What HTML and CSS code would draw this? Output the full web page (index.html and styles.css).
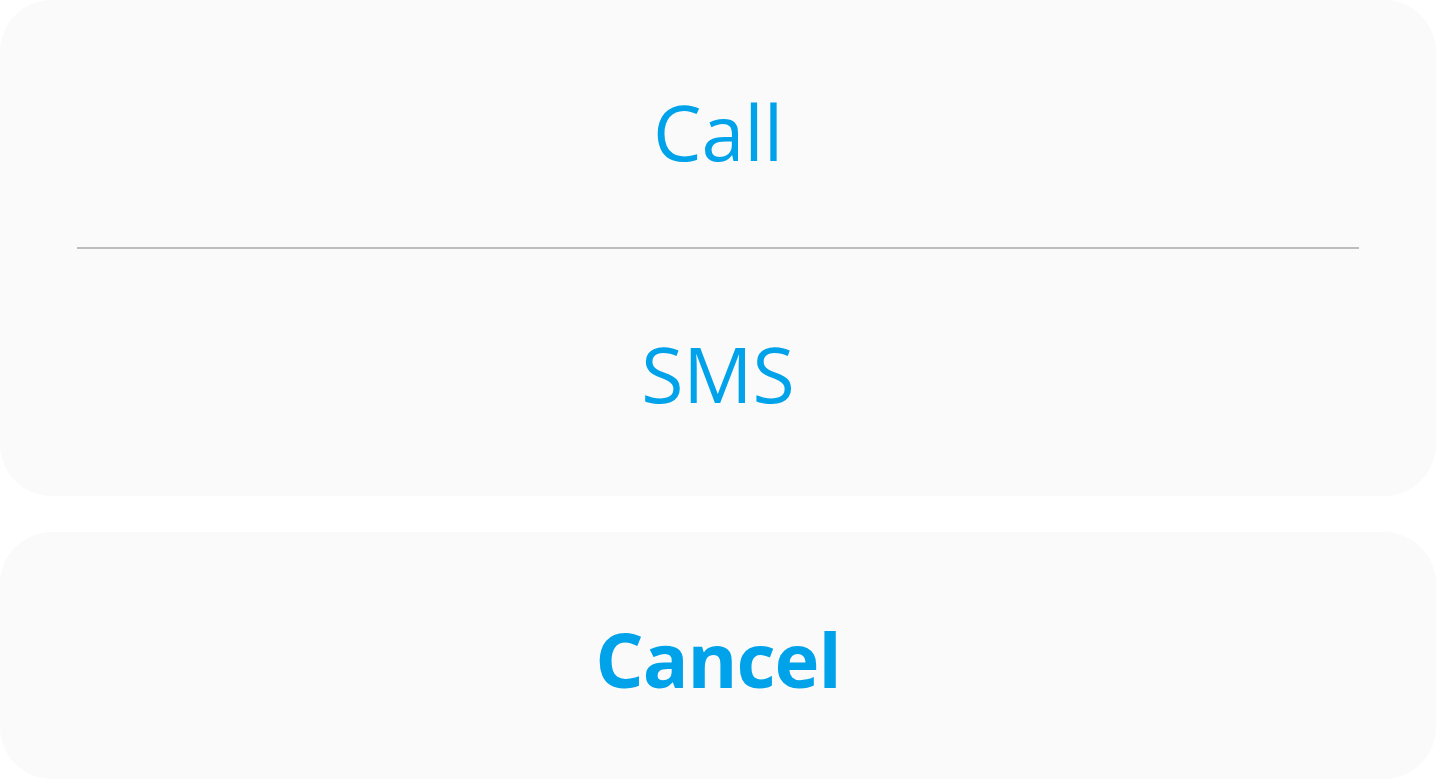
FILE: index.html
```html
<!DOCTYPE html>
<html>
<head>
<meta charset="utf-8">
<link rel="stylesheet" href="styles.css">
</head>
<body>
<div class="sheet">
  <div class="card">
    <div class="item item-first">Call</div>
    <div class="divider"></div>
    <div class="item item-second">SMS</div>
  </div>
  <div class="card cancel-card">
    <div class="item cancel">Cancel</div>
  </div>
</div>
</body>
</html>
```
FILE: styles.css
```css
html, body {
  margin: 0;
  padding: 0;
  background: #ffffff;
}
.sheet {
  width: 1436px;
  height: 780px;
  display: flex;
  flex-direction: column;
  gap: 36px;
  font-family: "Open Sans", "Noto Sans", sans-serif;
}
.card {
  background: #fafafa;
  border-radius: 52px;
  display: flex;
  flex-direction: column;
}
.item {
  height: 247px;
  flex: none;
  display: flex;
  align-items: center;
  justify-content: center;
  color: #00a2ea;
  font-size: 77px;
  box-sizing: border-box;
}
.item-first {
  padding-top: 16px;
}
.item-second {
  padding-top: 2px;
}
.divider {
  height: 2px;
  margin: 0 77px;
  background: #bdbdbd;
}
.cancel {
  font-weight: 700;
  font-size: 76px;
  letter-spacing: -1px;
  padding-top: 6px;
}
```
